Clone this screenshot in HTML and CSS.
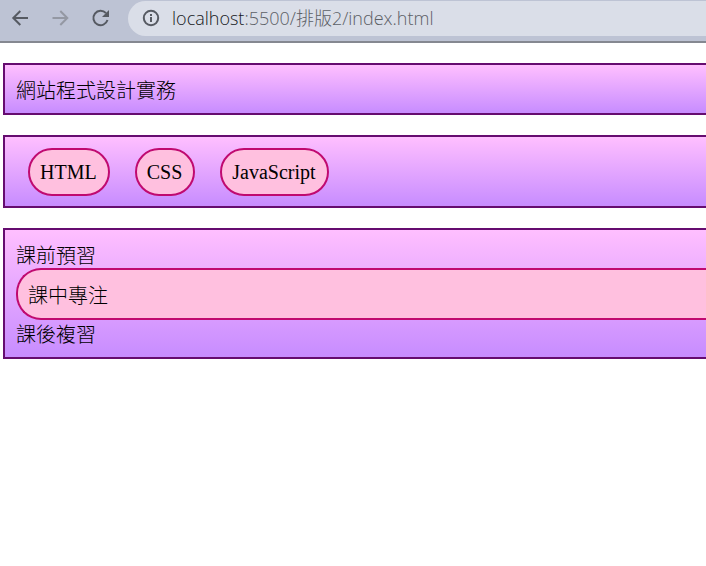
FILE: index.html
```html
<!DOCTYPE html>
<html lang="zh-Hant">
<head>
<meta charset="utf-8">
<title>網站程式設計實務</title>
<link rel="stylesheet" href="styles.css">
</head>
<body>
<header class="toolbar">
  <nav class="nav-buttons">
    <button class="nav-button" type="button" aria-label="Back">
      <svg viewBox="0 0 20 20" width="20" height="20"><path d="M18 10H3.500M10.300 3L3.300 10L10.300 17"/></svg>
    </button>
    <button class="nav-button" type="button" aria-label="Forward" disabled>
      <svg viewBox="0 0 20 20" width="20" height="20"><path d="M2.500 10H17M10.300 3L17.300 10L10.300 17"/></svg>
    </button>
    <button class="nav-button" type="button" aria-label="Reload">
      <svg viewBox="0 0 20 20" width="20" height="20"><path d="M16 5.200A7.200 7.200 0 1 0 17.500 12"/><path class="solid" d="M19 2V9H12Z"/></svg>
    </button>
  </nav>
  <div class="address">
    <svg class="info" viewBox="0 0 18 18" width="18" height="18"><circle cx="9" cy="9" r="7.200"/><path d="M9 8V13M9 5V7"/></svg>
    <a class="url" href="#"><span class="host">localhost</span>:5500/排版2/index.html</a>
  </div>
</header>
<main class="page">
  <h1 class="box title">網站程式設計實務</h1>
  <ul class="box topics">
    <li class="pill">HTML</li>
    <li class="pill">CSS</li>
    <li class="pill">JavaScript</li>
  </ul>
  <section class="box steps">
    <p>課前預習</p>
    <p class="pill pill-wide">課中專注</p>
    <p>課後複習</p>
  </section>
</main>
</body>
</html>
```
FILE: styles.css
```css
* {
  box-sizing: border-box;
}

body {
  margin: 0;
  background: #fff;
  color: #000;
  font: 20px/27px "Noto Sans CJK TC", sans-serif;
}

h1, p, ul {
  margin: 0;
  font-size: inherit;
  font-weight: 300;
}

.toolbar {
  display: flex;
  padding: 1px 0 5px 10px;
  border-bottom: 2px solid #858891;
  background: #bdc3d4;
}

.nav-buttons {
  display: flex;
  gap: 20px;
  align-items: center;
  margin-right: 18px;
  padding-bottom: 1px;
}

.nav-button {
  display: flex;
  padding: 0;
  border: 0;
  background: none;
  color: #565a62;
}

.nav-button:disabled {
  color: #9498a3;
}

svg {
  fill: none;
  stroke: currentColor;
  stroke-width: 2;
}

.solid {
  fill: currentColor;
  stroke: none;
}

.address {
  display: flex;
  flex: 1;
  gap: 12px;
  align-items: center;
  height: 35px;
  padding: 0 0 1px 14px;
  border-radius: 18px 0 0 18px;
  background: #dadee8;
}

.info {
  color: #565a62;
}

.url {
  color: #5c6066;
  font: 300 18px/24px "Open Sans", "Noto Sans CJK TC", sans-serif;
  text-decoration: none;
  white-space: nowrap;
}

.host {
  color: #16181c;
}

.page {
  display: grid;
  gap: 20px;
  padding: 20px 0 20px 3px;
}

.box {
  padding: 11px 0 10px 11px;
  border: 2px solid #660c70;
  border-right: 0;
  background: linear-gradient(#ffbfff, #c78cff);
}

.topics {
  display: flex;
  gap: 25px;
  padding-left: 23px;
  font-family: "Liberation Serif", serif;
  line-height: 23px;
  list-style: none;
}

.pill {
  padding: 11px 11px 10px 10px;
  border: 2px solid #c00a70;
  border-radius: 25px;
  background: #ffc0df;
  font-weight: 400;
}

.pill-wide {
  border-right: 0;
  border-radius: 25px 0 0 25px;
  font-weight: 300;
}
```
